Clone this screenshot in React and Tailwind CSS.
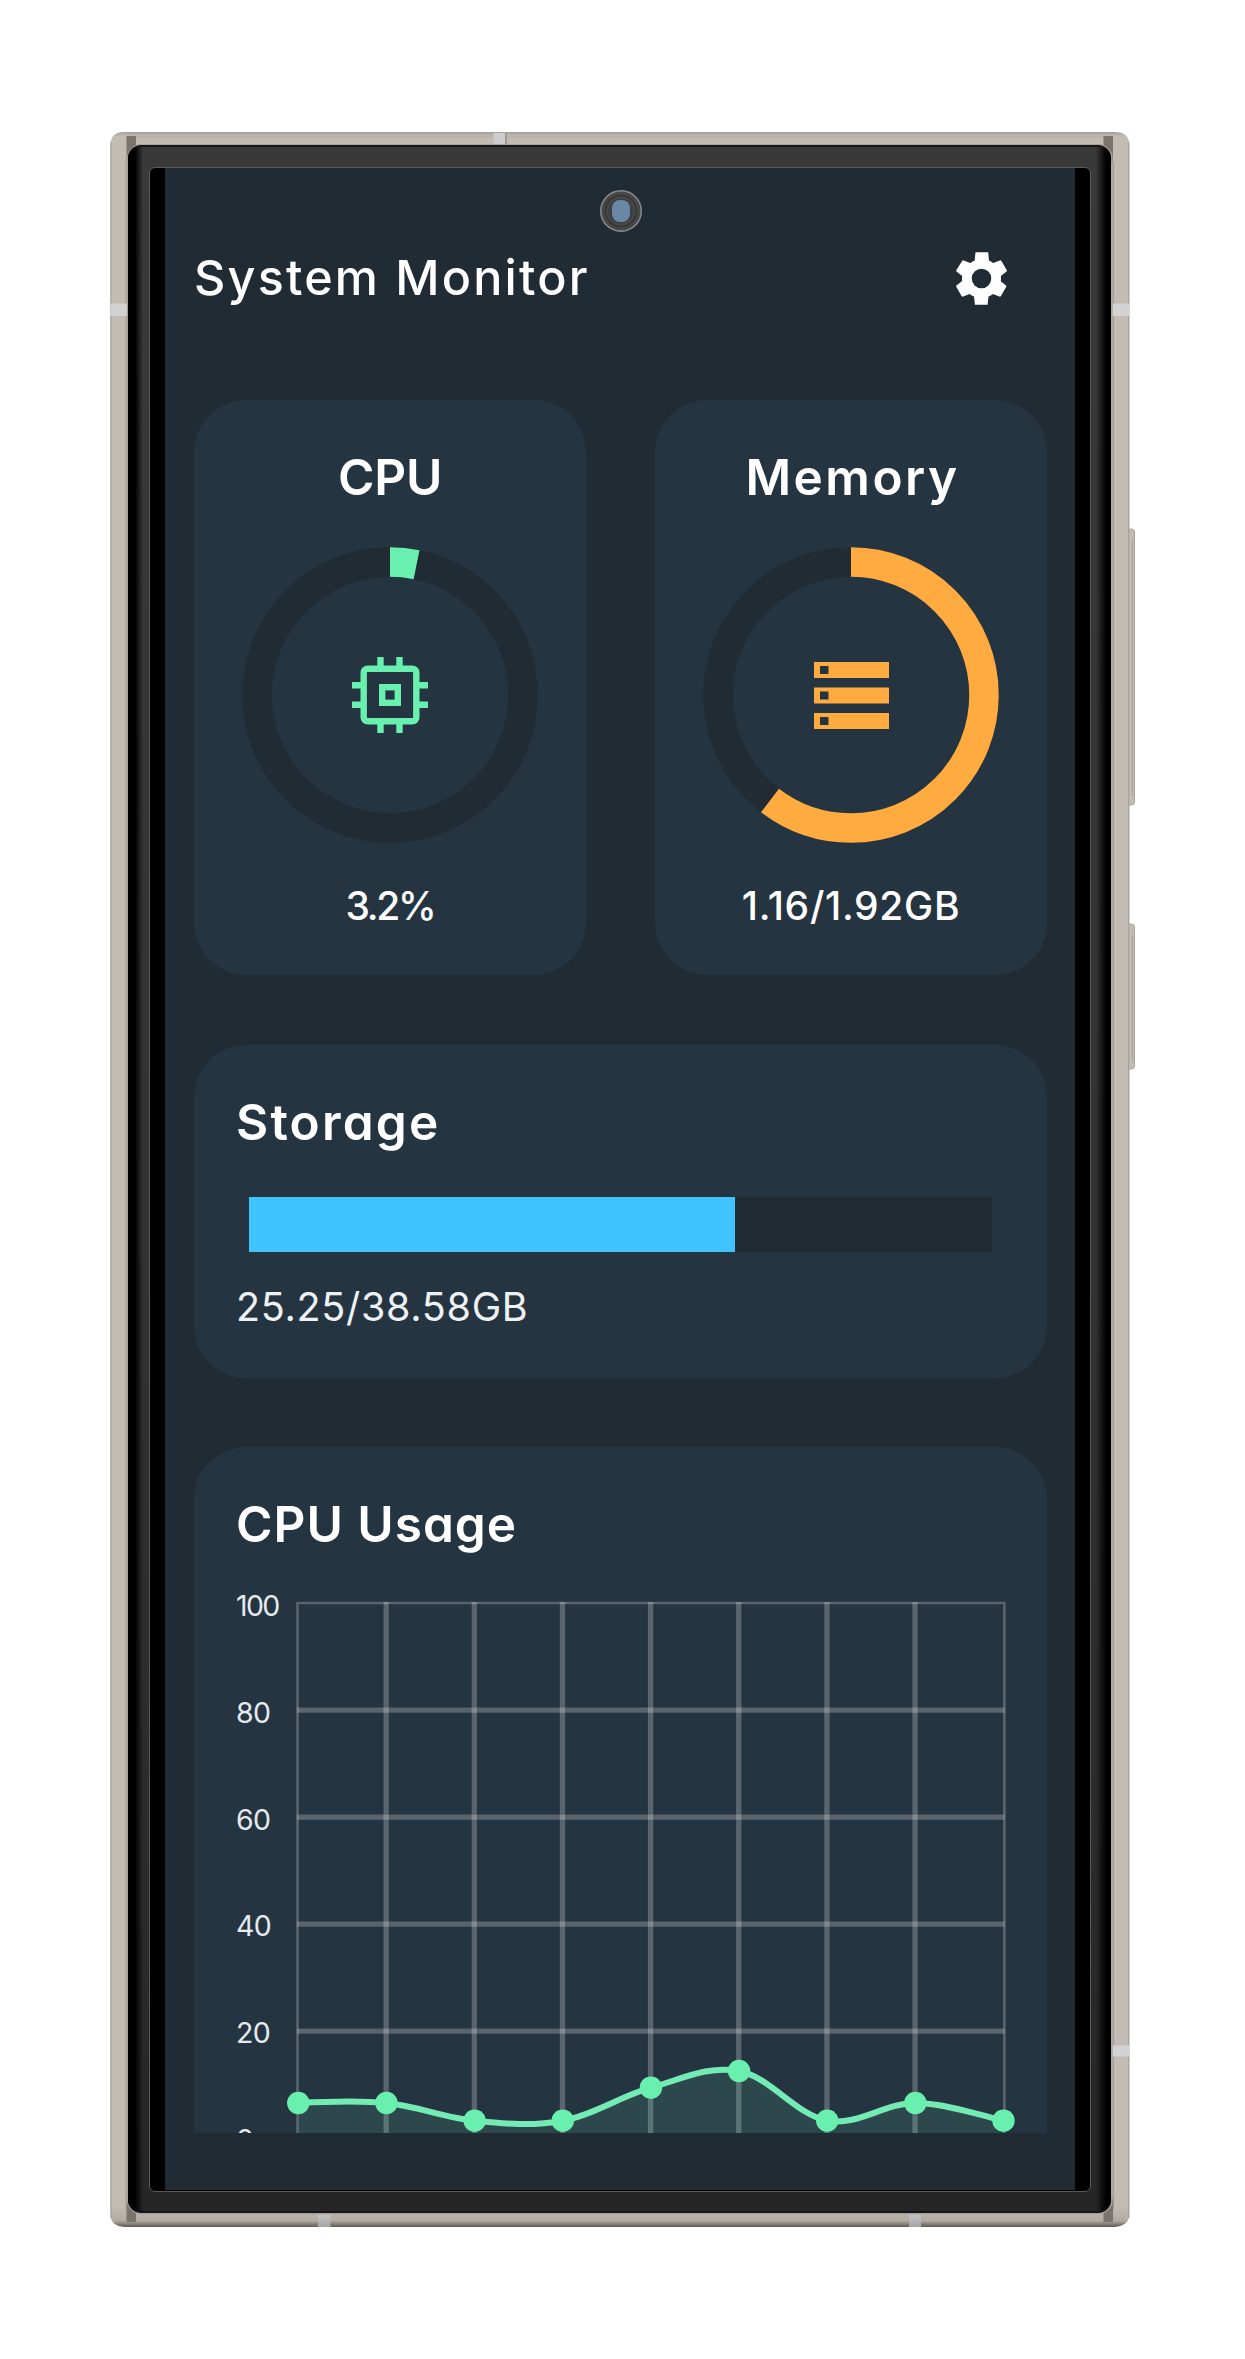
import React from "react";

const GREEN = "#69f0ae";
const ORANGE = "#ffab40";

const LEVELS = [0, 1, 2, 3, 4, 5].map((i) => 15.2 + i * 107);
const COLUMNS = [1, 2, 3, 4, 5, 6, 7].map((i) => 3 + i * 88.15);
const SAMPLES = [515, 515, 532.7, 532.7, 499.7, 483, 532.6, 515, 532.7].map((y, i) => [3.3 + i * 88.15, y]);

function smoothPath(points) {
  const smoothness = 0.35;
  let d = `M${points[0][0]} ${points[0][1]}`;
  let tx = 0;
  let ty = 0;
  for (let i = 1; i < points.length; i++) {
    const prev = points[i - 1];
    const cur = points[i];
    const next = points[i + 1] || cur;
    const c1x = prev[0] + tx;
    const c1y = prev[1] + ty;
    tx = ((next[0] - prev[0]) / 2) * smoothness;
    ty = ((next[1] - prev[1]) / 2) * smoothness;
    d += `C${c1x} ${c1y} ${cur[0] - tx} ${cur[1] - ty} ${cur[0]} ${cur[1]}`;
  }
  return d;
}

function Ring({ value, color, children }) {
  const r = 133;
  const c = 2 * Math.PI * r;
  return (
    <div className="grid h-[296px] w-[296px] place-items-center">
      <svg className="col-start-1 row-start-1" width="296" height="296" viewBox="0 0 296 296" fill="none">
        <circle cx="148" cy="148" r={r} stroke="#202b33" strokeWidth="29.5" />
        <circle
          cx="148"
          cy="148"
          r={r}
          stroke={color}
          strokeWidth="29.5"
          strokeDasharray={`${c * value} ${c}`}
          transform="rotate(-90 148 148)"
        />
      </svg>
      <div className="col-start-1 row-start-1">{children}</div>
    </div>
  );
}

function SettingsIcon() {
  return (
    <svg width="65" height="65" viewBox="0 0 24 24" fill="#fff">
      <path d="M19.14 12.94c.04-.3.06-.61.06-.94 0-.32-.02-.64-.07-.94l2.03-1.58a.49.49 0 0 0 .12-.61l-1.92-3.32a.488.488 0 0 0-.59-.22l-2.39.96c-.5-.38-1.03-.7-1.62-.94l-.3-3.0h-4.68l-.33 3.0c-.59.24-1.13.57-1.62.94l-2.39-.96c-.22-.08-.47 0-.59.22L2.74 8.87c-.12.21-.08.47.12.61l2.03 1.58c-.05.3-.09.63-.09.94s.02.64.07.94l-2.03 1.58a.49.49 0 0 0-.12.61l1.92 3.32c.12.22.37.29.59.22l2.39-.96c.5.38 1.03.7 1.62.94l.33 3.0h4.68l.33-3.0c.59-.24 1.13-.56 1.62-.94l2.39.96c.22.08.47 0 .59-.22l1.92-3.32c.12-.22.07-.47-.12-.61l-2.01-1.58zM12 15.6a3.6 3.6 0 1 1 0-7.2 3.6 3.6 0 0 1 0 7.2z" />
    </svg>
  );
}

function ChipIcon() {
  return (
    <svg width="76" height="76" viewBox="0 0 76 76" fill="none" stroke={GREEN} strokeWidth="6.4">
      <rect x="11.7" y="11.7" width="52.6" height="52.6" rx="4" />
      <rect x="30.2" y="30.2" width="15.6" height="15.6" />
      <path d="M28.5 0V10M47.5 0V10M28.5 66V76M47.5 66V76M0 28.3H10M0 47.7H10M66 28.3H76M66 47.7H76" />
    </svg>
  );
}

function StorageIcon() {
  return (
    <svg width="75" height="67" viewBox="0 0 75 67" fill={ORANGE} fillRule="evenodd">
      <path d="M0 0H75V16H0zM6 4V12H14.5V4z" />
      <path d="M0 25.5H75V41.5H0zM6 29.5V37.5H14.5V29.5z" />
      <path d="M0 51H75V67H0zM6 55V63H14.5V55z" />
    </svg>
  );
}

function GaugeCard({ title, value, color, label, titleClass, labelClass, children }) {
  return (
    <section className="flex h-[575px] flex-1 flex-col items-center rounded-[52px] bg-[#253441] pt-[47px]">
      <h2 className={`text-[49.5px] leading-[60px] font-semibold whitespace-nowrap ${titleClass}`}>{title}</h2>
      <div className="pt-[40px] pb-[38px]">
        <Ring value={value} color={color}>
          {children}
        </Ring>
      </div>
      <p className={`text-[39px] leading-[50px] font-medium whitespace-nowrap ${labelClass}`}>{label}</p>
    </section>
  );
}

function Camera() {
  return (
    <svg width="44" height="44" viewBox="0 0 44 44" fill="none">
      <circle cx="22" cy="22" r="20.3" fill="#484848" stroke="#8b8e90" strokeWidth="1.4" />
      <circle cx="22" cy="22" r="15.5" stroke="#383838" strokeWidth="2" />
      <circle cx="22" cy="22" r="12.5" fill="#3b3f45" />
      <rect x="13" y="11" width="18" height="22" rx="8" fill="#6b87a6" />
    </svg>
  );
}

function Chart() {
  const line = smoothPath(SAMPLES);
  return (
    <div className="flex h-[545px] overflow-hidden pl-[42px]">
      <div className="-mt-[35px] flex w-[58px] shrink-0 flex-col text-[28.5px] leading-[106.8px] text-[#e4eaee]">
        <span className="tracking-[-1.6px]">100</span>
        <span className="tracking-[-0.6px]">80</span>
        <span className="tracking-[-0.6px]">60</span>
        <span className="tracking-[-0.6px]">40</span>
        <span className="tracking-[-0.6px]">20</span>
        <span>0</span>
      </div>
      <svg className="shrink-0 overflow-visible" width="750" height="545" viewBox="-1 0 750 545" fill="none">
        <g stroke="#fff" strokeOpacity="0.24">
          {COLUMNS.map((x) => (
            <path key={x} d={`M${x} 14V545`} strokeWidth="5.3" />
          ))}
          {LEVELS.slice(1, 5).map((y) => (
            <path key={y} d={`M2 ${y}H709.5`} strokeWidth="5.3" />
          ))}
          <path d="M2.5 560V15H709.4V560" strokeWidth="2.6" />
        </g>
        <path d={`${line}V560H3Z`} fill={GREEN} fillOpacity="0.11" />
        <path d={line} stroke="#74ebb4" strokeWidth="6" />
        {SAMPLES.map(([x, y]) => (
          <circle key={x} cx={x} cy={y} r="11.2" fill={GREEN} />
        ))}
      </svg>
    </div>
  );
}

function Screen() {
  return (
    <main className="flex h-[2022px] w-[910px] flex-col overflow-hidden bg-[#212b33] pr-[28px] pl-[29px] text-white">
      <div className="flex h-[78px] justify-center pt-[21px]">
        <Camera />
      </div>
      <header className="flex h-[154px] items-start justify-between pr-[33px]">
        <h1 className="pt-[2px] text-[48.5px] leading-[60px] font-medium tracking-[2.2px] whitespace-nowrap">
          System Monitor
        </h1>
        <button aria-label="Settings">
          <SettingsIcon />
        </button>
      </header>
      <div className="flex h-[1733px] flex-col overflow-hidden">
        <div className="flex shrink-0 gap-[69px]">
          <GaugeCard
            title="CPU"
            value={0.032}
            color={GREEN}
            label="3.2%"
            titleClass="tracking-[-0.2px]"
            labelClass="tracking-[-2.3px]"
          >
            <ChipIcon />
          </GaugeCard>
          <GaugeCard
            title="Memory"
            value={0.604}
            color={ORANGE}
            label="1.16/1.92GB"
            titleClass="tracking-[2.5px] pl-[3px]"
            labelClass="tracking-[0.7px]"
          >
            <StorageIcon />
          </GaugeCard>
        </div>
        <section className="mt-[70px] h-[333px] shrink-0 rounded-[52px] bg-[#253441] pt-[47px] pr-[42px] pl-[42px]">
          <h2 className="text-[49.5px] leading-[60px] font-semibold tracking-[2.2px]">Storage</h2>
          <div className="mx-[13px] mt-[45px] h-[55px] bg-[#202b33]">
            <div className="h-full bg-[#40c4ff]" style={{ width: `${(25.25 / 38.58) * 100}%` }} />
          </div>
          <p className="mt-[30px] text-[39.5px] leading-[50px] tracking-[0.7px] text-[#eef1f3]">25.25/38.58GB</p>
        </section>
        <section className="mt-[69px] shrink-0 rounded-t-[52px] bg-[#253441] pt-[47px]">
          <h2 className="pb-[34px] pl-[42px] text-[49.5px] leading-[60px] font-semibold tracking-[1px]">CPU Usage</h2>
          <Chart />
        </section>
      </div>
    </main>
  );
}

/* Metal case: frame outline, side keys, corner shadows and antenna bands. */
function CaseArt() {
  return (
    <svg
      className="col-start-1 row-start-1 overflow-visible"
      width="1019"
      height="2095"
      viewBox="0 0 1019 2095"
      fill="none"
    >
      <defs>
        <linearGradient id="rim" x1="0" y1="0" x2="0" y2="1">
          <stop offset="0" stopColor="#a39e98" />
          <stop offset="0.002" stopColor="#c2bcb5" />
          <stop offset="0.99" stopColor="#c2bcb5" />
          <stop offset="0.997" stopColor="#b2aba3" />
          <stop offset="1" stopColor="#5f5952" />
        </linearGradient>
        <linearGradient id="band" x1="0" y1="0" x2="0" y2="1">
          <stop stopColor="#cacaca" />
          <stop offset="1" stopColor="#a4a4a4" />
        </linearGradient>
      </defs>
      <rect x="1013" y="397" width="11.5" height="276" rx="3" fill="#c2bcb5" stroke="#aca69f" />
      <rect x="1013" y="792" width="11.5" height="145" rx="3" fill="#c2bcb5" stroke="#aca69f" />
      <path d="M1022.5 407V664M1022.5 803V929" stroke="#a59f98" />
      <path
        d="M0.5 12Q1 0 14 0H1005Q1018.5 0 1019.3 12V2085Q1017 2094 1005 2095H14Q2 2094 0.5 2085Z"
        fill="url(#rim)"
      />
      <path d="M1 10V2086M1018.7 10V2086" stroke="#a5a29c" strokeWidth="1.2" />
      <path d="M16 5H1003" stroke="#b0aaa3" />
      <path d="M16.5 4H26V30H16.5ZM993.5 4H1003V30H993.5ZM16.5 2066H26V2090H16.5ZM993.5 2066H1003V2090H993.5Z" fill="#7b746d" />
      <path d="M16 30V2078M1003.6 30V2078" stroke="#a39a93" />
      <path d="M383.5 1H395V13H383.5Z" fill="#cdcdcd" />
      <path d="M396 1V13" stroke="#9f9a94" strokeWidth="2" />
      <path d="M0.5 171.5H17V184H0.5ZM1002 171.5H1019.5V184H1002ZM1002 1913.5H1019.5V1924.5H1002Z" fill="#d2d2d2" />
      <path d="M208 2080H220.5V2095H208ZM799 2080H811V2095H799Z" fill="url(#band)" />
      <rect x="17.5" y="12.7" width="984.5" height="2069" rx="14" stroke="#a9a29b" strokeWidth="1.4" />
    </svg>
  );
}

function Phone() {
  return (
    <div className="grid h-[2095px] w-[1019px]">
      <CaseArt />
      <div className="col-start-1 row-start-1 px-[18px] pt-[13px]">
        <div className="h-[2068px] overflow-hidden rounded-[13px] border-y-2 border-y-[#151515] bg-gradient-to-b from-[#393939] via-[#333333] to-[#262626]">
          <div className="h-full bg-[linear-gradient(to_right,#000_0,#000_7px,transparent_15px,transparent_968px,#000_978px)] pt-[20px] pl-[21px]">
            <div className="h-[2025px] w-[942px] rounded-[6px] border border-[#5a5a5a] bg-black pl-[15px]">
              <Screen />
            </div>
          </div>
        </div>
      </div>
    </div>
  );
}

export default function App() {
  return (
    <div
      className="h-[2359px] w-[1245px] overflow-hidden bg-white pt-[132px] pl-[110px] font-['Inter',sans-serif]"
      style={{ fontFeatureSettings: '"cv11"' }}
    >
      <Phone />
    </div>
  );
}
